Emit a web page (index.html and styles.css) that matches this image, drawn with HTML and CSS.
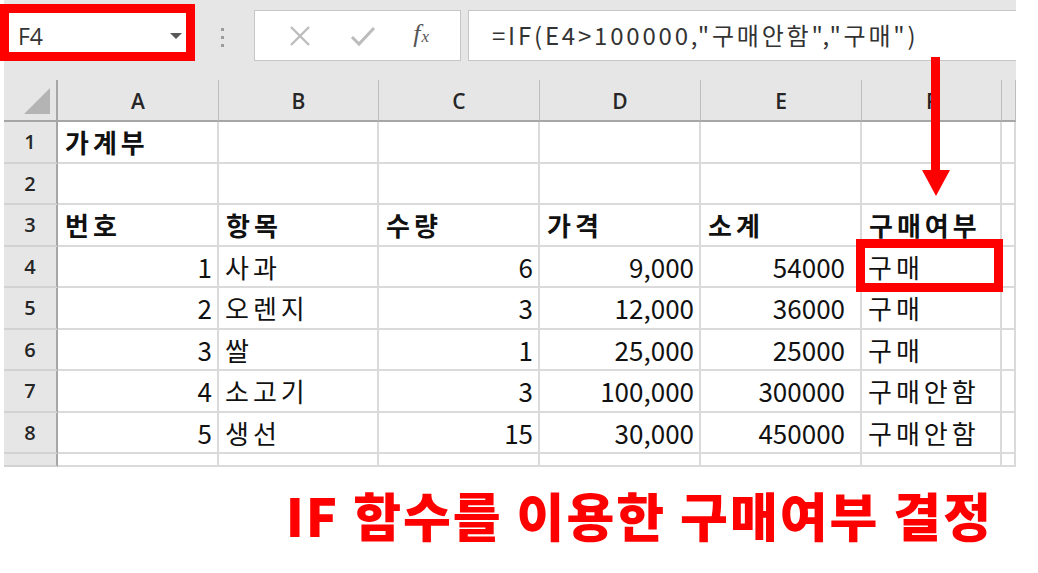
FILE: index.html
```html
<!DOCTYPE html>
<html>
	<head>
		<meta charset="utf-8">
		<title>IF 함수 - 구매여부</title>
		<link rel="stylesheet" href="styles.css">
	</head>
	<body>
		<div class="page">
			<div class="excel">
				<div class="toolbar">
					<div class="namebox">
						<span>F4</span>
						<i class="caret"></i>
					</div>
					<div class="dots"><i></i><i></i><i></i></div>
					<div class="fxbox">
						<svg class="ico" width="24" height="20" viewBox="0 0 24 20">
							<path d="M3 1 L21 19 M21 1 L3 19" stroke="#bcbcbc" stroke-width="2.4" fill="none"/>
						</svg>
						<svg class="ico" width="26" height="22" viewBox="0 0 26 22">
							<path d="M2 12 L9 19 L24 3" stroke="#bcbcbc" stroke-width="3" fill="none"/>
						</svg>
						<span class="fx"><i>f</i><i class="x">x</i></span>
					</div>
					<div class="formula">=IF(E4&gt;100000,"구매안함","구매")</div>
				</div>

				<div class="sheet">
					<!-- 열 머리글 -->
					<div class="hd corner"><svg width="28" height="28" viewBox="0 0 28 28"><path d="M26 1 L26 27 L0 27 Z" fill="#b4b4b4"/></svg></div>
					<div class="hd">A</div>
					<div class="hd">B</div>
					<div class="hd">C</div>
					<div class="hd">D</div>
					<div class="hd">E</div>
					<div class="hd">F</div>
					<div class="hd"></div>

					<div class="rh">1</div>
					<div class="c b">가계부</div>
					<div class="c"></div><div class="c"></div><div class="c"></div><div class="c"></div><div class="c"></div><div class="c"></div>

					<div class="rh">2</div>
					<div class="c"></div><div class="c"></div><div class="c"></div><div class="c"></div><div class="c"></div><div class="c"></div><div class="c"></div>

					<div class="rh">3</div>
					<div class="c b">번호</div>
					<div class="c b">항목</div>
					<div class="c b">수량</div>
					<div class="c b">가격</div>
					<div class="c b">소계</div>
					<div class="c b">구매여부</div>
					<div class="c"></div>

					<div class="rh">4</div>
					<div class="c num">1</div>
					<div class="c">사과</div>
					<div class="c num">6</div>
					<div class="c num">9,000</div>
					<div class="c num sub">54000</div>
					<div class="c">구매</div>
					<div class="c"></div>

					<div class="rh">5</div>
					<div class="c num">2</div>
					<div class="c">오렌지</div>
					<div class="c num">3</div>
					<div class="c num">12,000</div>
					<div class="c num sub">36000</div>
					<div class="c">구매</div>
					<div class="c"></div>

					<div class="rh">6</div>
					<div class="c num">3</div>
					<div class="c">쌀</div>
					<div class="c num">1</div>
					<div class="c num">25,000</div>
					<div class="c num sub">25000</div>
					<div class="c">구매</div>
					<div class="c"></div>

					<div class="rh">7</div>
					<div class="c num">4</div>
					<div class="c">소고기</div>
					<div class="c num">3</div>
					<div class="c num">100,000</div>
					<div class="c num sub">300000</div>
					<div class="c">구매안함</div>
					<div class="c"></div>

					<div class="rh">8</div>
					<div class="c num">5</div>
					<div class="c">생선</div>
					<div class="c num">15</div>
					<div class="c num">30,000</div>
					<div class="c num sub">450000</div>
					<div class="c">구매안함</div>
					<div class="c"></div>

					<div class="rh"></div>
					<div class="c"></div><div class="c"></div><div class="c"></div><div class="c"></div><div class="c"></div><div class="c"></div><div class="c"></div>
				</div>
			</div>

			<p class="caption">IF 함수를 이용한 구매여부 결정</p>

			<!-- 빨간 강조 표시 -->
			<div class="mark mark-name"></div>
			<div class="mark mark-cell"></div>
			<svg class="arrow" width="28" height="140" viewBox="0 0 28 140">
				<rect x="9" y="0" width="9" height="114" fill="#ff0000"/>
				<path d="M0 113 L28 113 L14 139 Z" fill="#ff0000"/>
			</svg>
		</div>
	</body>
</html>
```

FILE: styles.css
```css
html, body {
	margin: 0;
	padding: 0;
	background: #ffffff;
}

.page {
	position: relative;
	width: 1038px;
	height: 573px;
	overflow: hidden;
	font-family: "Noto Sans CJK KR", "Noto Sans", sans-serif;
}

.excel {
	margin-left: 4px;
	width: 1012px;
}

/* 수식 입력줄 */
.toolbar {
	display: flex;
	align-items: flex-start;
	height: 80px;
	padding-top: 10px;
	box-sizing: border-box;
	background: #e6e6e6;
}

.namebox {
	display: flex;
	align-items: center;
	justify-content: space-between;
	width: 186px;
	height: 51px;
	box-sizing: border-box;
	padding: 0 7px 0 13px;
	background: #ffffff;
	border: 1px solid #c6c6c6;
	font-family: "Open Sans", "Noto Sans", sans-serif;
	font-size: 23px;
	color: #333333;
}

.caret {
	width: 0;
	height: 0;
	border-left: 6px solid transparent;
	border-right: 6px solid transparent;
	border-top: 6px solid #595959;
}

.dots {
	display: flex;
	flex-direction: column;
	align-items: center;
	gap: 5px;
	width: 64px;
	padding-top: 18px;
}

.dots i {
	width: 3px;
	height: 3px;
	background: #9c9c9c;
}

.fxbox {
	display: flex;
	align-items: center;
	justify-content: space-around;
	width: 207px;
	height: 51px;
	box-sizing: border-box;
	padding: 0 12px 0 14px;
	background: #ffffff;
	border: 1px solid #c6c6c6;
}

.fx {
	font-family: "Liberation Serif", serif;
	font-size: 26px;
	color: #555555;
	margin-top: -4px;
}

.fx .x {
	font-size: 17px;
	margin-left: 1px;
}

.formula {
	flex: 1;
	height: 51px;
	box-sizing: border-box;
	margin-left: 7px;
	padding-left: 23px;
	background: #ffffff;
	border: 1px solid #c6c6c6;
	border-right: none;
	font-size: 24px;
	letter-spacing: 2.8px;
	line-height: 48px;
	color: #333333;
	white-space: nowrap;
}

/* 워크시트 */
.sheet {
	display: grid;
	grid-template-columns: 54px 161px 160px 161px 161px 161px 140px 14px;
	grid-template-rows: 42px repeat(8, 41.5px) 13px;
	background: #ffffff;
}

.hd {
	display: flex;
	align-items: center;
	justify-content: center;
	background: #e6e6e6;
	border-right: 1px solid #bdbdbd;
	border-bottom: 2px solid #a6a6a6;
	box-sizing: border-box;
	font-family: "Open Sans", "Noto Sans", sans-serif;
	font-size: 21px;
	font-weight: 600;
	color: #262626;
	padding-top: 2px;
}

.corner {
	align-items: flex-end;
	justify-content: flex-end;
	padding: 0 4px 5px 0;
	border-right: 2px solid #a6a6a6;
}

.rh {
	display: flex;
	align-items: center;
	justify-content: center;
	background: #e6e6e6;
	border-right: 2px solid #a6a6a6;
	border-bottom: 2px solid #d2d2d2;
	box-sizing: border-box;
	font-family: "Open Sans", "Noto Sans", sans-serif;
	font-size: 20px;
	font-weight: 600;
	color: #262626;
}

.c {
	display: flex;
	align-items: center;
	padding: 0 5px 0 6px;
	border-right: 2px solid #dadada;
	border-bottom: 2px solid #dadada;
	box-sizing: border-box;
	font-size: 26px;
	letter-spacing: 4px;
	color: #111111;
	white-space: nowrap;
}

.b {
	font-weight: bold;
	padding-left: 7px;
}

.num {
	justify-content: flex-end;
	letter-spacing: 0;
}

.sub {
	padding-right: 15px;
}

.caption {
	margin: 22px 45px 0 0;
	text-align: right;
	font-family: "Noto Sans CJK KR", sans-serif;
	font-weight: 900;
	font-size: 52px;
	letter-spacing: 2px;
	line-height: 1;
	color: #ff0000;
}

/* 강조 표시 */
.mark {
	position: absolute;
	border: 9px solid #ff0000;
	box-sizing: border-box;
}

.mark-name {
	left: 0;
	top: 4px;
	width: 195px;
	height: 57px;
}

.mark-cell {
	left: 856px;
	top: 239px;
	width: 147px;
	height: 53px;
}

.arrow {
	position: absolute;
	left: 922px;
	top: 57px;
}
```
